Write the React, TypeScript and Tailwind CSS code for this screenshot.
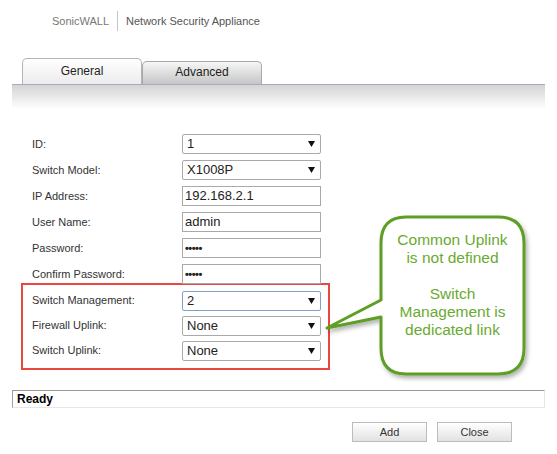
import React from 'react';

type Field = { label: string; kind: 'select' | 'text' | 'password'; value: string; focus?: boolean };

const topFields: Field[] = [
  { label: 'ID:', kind: 'select', value: '1' },
  { label: 'Switch Model:', kind: 'select', value: 'X1008P' },
  { label: 'IP Address:', kind: 'text', value: '192.168.2.1' },
  { label: 'User Name:', kind: 'text', value: 'admin' },
  { label: 'Password:', kind: 'password', value: '•••••' },
  { label: 'Confirm Password:', kind: 'password', value: '•••••' },
];

const boxedFields: Field[] = [
  { label: 'Switch Management:', kind: 'select', value: '2', focus: true },
  { label: 'Firewall Uplink:', kind: 'select', value: 'None' },
  { label: 'Switch Uplink:', kind: 'select', value: 'None' },
];

const Arrow = () => (
  <svg width="7" height="6" viewBox="0 0 7 6" className="shrink-0">
    <polygon points="0,0 7,0 3.5,6" fill="#111" />
  </svg>
);

const Control: React.FC<{ f: Field }> = ({ f }) => {
  if (f.kind === 'select') {
    return (
      <div
        className={`flex h-[20px] w-[139px] items-center justify-between rounded-[2px] border bg-white pl-[4px] pr-[5px] text-[13px] text-[#222] ${
          f.focus ? 'border-[#7da2ce]' : 'border-[#a9a9a9]'
        }`}
      >
        <span>{f.value}</span>
        <Arrow />
      </div>
    );
  }
  return (
    <div
      className={`flex h-[20px] w-[139px] items-center border border-[#a9a9a9] bg-white pl-[2px] text-[#222] ${
        f.kind === 'password' ? 'text-[11px] font-bold tracking-[-0.5px]' : 'text-[13px]'
      }`}
    >
      {f.value}
    </div>
  );
};

const Row: React.FC<{ f: Field; h: string }> = ({ f, h }) => (
  <div className={`flex items-center ${h}`}>
    <div className="w-[150px] text-[11px] text-[#333]">{f.label}</div>
    <Control f={f} />
  </div>
);

export default function App() {
  return (
    <div
      className="relative h-[454px] w-[557px] overflow-hidden bg-white"
      style={{ fontFamily: '"Liberation Sans", Arial, sans-serif' }}
    >
      {/* Header */}
      <div className="flex h-[42px] items-center pl-[52px] text-[11px]">
        <span className="text-[#777]">SonicWALL</span>
        <span className="mx-[8px] h-[20px] w-px bg-[#c4c4c4]" />
        <span className="text-[#555]">Network Security Appliance</span>
      </div>

      {/* Tabs */}
      <div className="mt-[16px] flex h-[26px] items-end pl-[22px]">
        <div className="flex h-[26px] w-[120px] items-center justify-center rounded-t-[5px] border border-b-0 border-[#b4b4b4] bg-gradient-to-b from-white to-[#ececec] pb-[2px] text-[12px] text-[#222]">
          General
        </div>
        <div className="flex h-[23px] w-[120px] items-center justify-center rounded-t-[5px] border border-b-0 border-[#a8a8a8] bg-gradient-to-b from-[#f6f6f6] to-[#c6c6c6] pb-[3px] text-[12px] text-[#222]">
          Advanced
        </div>
      </div>
      <div className="mx-[12px] h-[25px] border-t border-[#a9a9c0] bg-gradient-to-b from-[#d4d4d4] to-white" />

      {/* Form */}
      <div className="pt-[22px]">
        <div className="pl-[32px]">
          {topFields.map((f) => (
            <Row key={f.label} f={f} h="h-[26px]" />
          ))}
        </div>
        <div className="-mt-[4px] ml-[21px] w-[309px] border-2 border-[#e8483f] pb-[5px] pl-[9px] pt-[3px]">
          {boxedFields.map((f) => (
            <Row key={f.label} f={f} h="h-[25px]" />
          ))}
        </div>
      </div>

      {/* Status */}
      <div className="mx-[12px] mt-[20px] flex h-[18px] items-center border border-l-[#a0a0a0] border-t-[#999] border-r-[#e6e6e6] border-b-[#e6e6e6] pl-[4px] text-[12px] font-bold text-black">
        Ready
      </div>

      {/* Buttons */}
      <div className="mt-[14px] flex justify-end gap-[10px] pr-[45px]">
        <button className="h-[20px] w-[75px] border border-[#bcbcbc] bg-gradient-to-b from-white to-[#e2e2e2] text-[11px] text-[#333]">
          Add
        </button>
        <button className="h-[20px] w-[75px] border border-[#bcbcbc] bg-gradient-to-b from-white to-[#e2e2e2] text-[11px] text-[#333]">
          Close
        </button>
      </div>

      {/* Callout */}
      <svg className="absolute left-0 top-0" width="557" height="454" viewBox="0 0 557 454">
        <defs>
          <filter id="sh" x="-20%" y="-20%" width="140%" height="140%">
            <feDropShadow dx="2" dy="3" stdDeviation="2" floodColor="#000" floodOpacity="0.3" />
          </filter>
        </defs>
        <path
          d="M406 217 H498 Q524 217 524 243 V348 Q524 374 498 374 H406 Q381 374 381 348 V317 L327 328 L381 300 V243 Q381 217 406 217 Z"
          fill="#fff"
          stroke="#5c9e25"
          strokeWidth="3"
          strokeLinejoin="round"
          filter="url(#sh)"
        />
      </svg>
      <div className="absolute left-[381px] top-[231px] w-[143px] text-center text-[15.5px] leading-[18px] text-[#6aaa2f]">
        Common Uplink
        <br />
        is not defined
        <br />
        <br />
        Switch
        <br />
        Management is
        <br />
        dedicated link
      </div>
    </div>
  );
}
